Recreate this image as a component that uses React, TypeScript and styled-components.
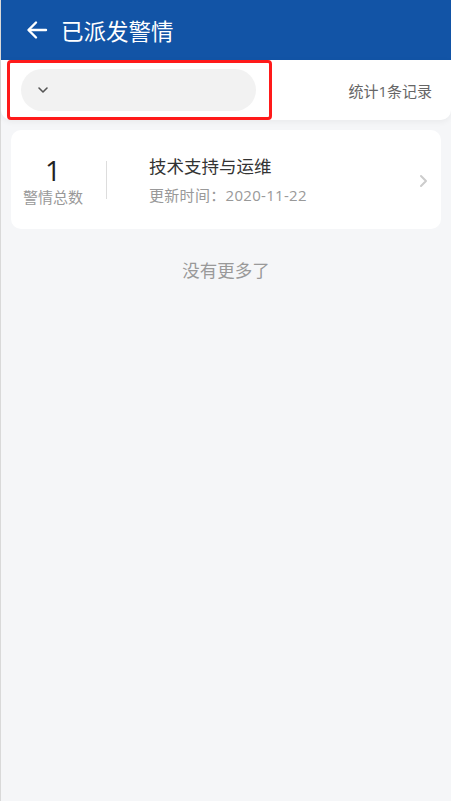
import React from "react";
import styled, { createGlobalStyle } from "styled-components";

const Global = createGlobalStyle`
  html, body { margin: 0; padding: 0; }
  body {
    background: #f5f6f8;
    font-family: "Open Sans", "Noto Sans CJK SC", sans-serif;
  }
  * { box-sizing: border-box; }
`;

const Page = styled.div`
  min-height: 801px;
  background: #f5f6f8;
  border-left: 1px solid #d9d9d9;
  display: flex;
  flex-direction: column;
`;

const Header = styled.header`
  height: 60px;
  background: #1254a6;
  display: flex;
  align-items: center;
  padding-left: 24px;
  gap: 12px;
  color: #fff;
`;

const Title = styled.h1`
  margin: 0;
  font-size: 22.5px;
  font-weight: 400;
  font-family: "Noto Sans CJK SC", sans-serif;
`;

const FilterBar = styled.div`
  height: 60px;
  background: #fff;
  border-radius: 0 0 10px 10px;
  box-shadow: 0 2px 6px rgba(0, 0, 0, 0.05);
  display: flex;
  align-items: center;
  justify-content: space-between;
  padding: 0 19px 0 6px;
`;

const Highlight = styled.div`
  width: 265px;
  height: 60px;
  border: 3px solid #ff1a1a;
  border-radius: 4px;
  display: flex;
  align-items: center;
  padding-left: 11px;
`;

const Select = styled.div`
  width: 235px;
  height: 42px;
  border-radius: 21px;
  background: #f2f2f2;
  display: flex;
  align-items: center;
  padding-left: 16px;
`;

const Count = styled.span`
  font-size: 15px;
  color: #666;
  font-family: "Open Sans", "Noto Sans CJK SC", sans-serif;
`;

const Content = styled.main`
  padding: 10px 10px 0 10px;
  display: flex;
  flex-direction: column;
`;

const Card = styled.div`
  height: 99px;
  background: #fff;
  border-radius: 10px;
  display: flex;
  align-items: center;
`;

const Stat = styled.div`
  width: 84px;
  display: flex;
  flex-direction: column;
  align-items: center;
  gap: 2px;
  padding-top: 2px;
`;

const StatNum = styled.span`
  font-size: 28px;
  line-height: 30px;
  color: #222;
  font-family: "Open Sans", sans-serif;
`;

const StatLabel = styled.span`
  font-size: 15px;
  line-height: 20px;
  color: #999;
  font-family: "Noto Sans CJK SC", sans-serif;
`;

const Divider = styled.div`
  width: 1px;
  height: 38px;
  background: #ddd;
  margin-left: 11px;
  margin-right: 42px;
`;

const Info = styled.div`
  flex: 1;
  display: flex;
  flex-direction: column;
  gap: 7px;
`;

const InfoTitle = styled.span`
  font-size: 17.5px;
  line-height: 24px;
  color: #333;
  font-family: "Noto Sans CJK SC", sans-serif;
`;

const InfoTime = styled.span`
  font-size: 15px;
  line-height: 20px;
  color: #999;
  letter-spacing: 0.3px;
  font-family: "Open Sans", "Noto Sans CJK SC", sans-serif;
`;

const Arrow = styled.div`
  width: 24px;
  display: flex;
  justify-content: center;
  margin-right: 6px;
  margin-top: 2px;
`;

const NoMore = styled.div`
  margin-top: 28px;
  text-align: center;
  font-size: 17.5px;
  color: #999;
  font-family: "Noto Sans CJK SC", sans-serif;
`;

export default function App() {
  return (
    <>
      <Global />
      <Page>
        <Header>
          <svg width="24" height="24" viewBox="0 0 24 24" fill="none" stroke="#fff" strokeWidth="2.4" strokeLinecap="round" strokeLinejoin="round">
            <path d="M21 12H4" />
            <path d="M11 4.5L3.5 12 11 19.5" />
          </svg>
          <Title>已派发警情</Title>
        </Header>
        <FilterBar>
          <Highlight>
            <Select>
              <svg width="12" height="8" viewBox="0 0 12 8" fill="none" stroke="#555" strokeWidth="1.6" strokeLinecap="round" strokeLinejoin="round">
                <path d="M2 2l4 4 4-4" />
              </svg>
            </Select>
          </Highlight>
          <Count>统计1条记录</Count>
        </FilterBar>
        <Content>
          <Card>
            <Stat>
              <StatNum>1</StatNum>
              <StatLabel>警情总数</StatLabel>
            </Stat>
            <Divider />
            <Info>
              <InfoTitle>技术支持与运维</InfoTitle>
              <InfoTime>更新时间：2020-11-22</InfoTime>
            </Info>
            <Arrow>
              <svg width="9" height="14" viewBox="0 0 9 14" fill="none" stroke="#ccc" strokeWidth="2" strokeLinecap="round" strokeLinejoin="round">
                <path d="M2 2l5 5-5 5" />
              </svg>
            </Arrow>
          </Card>
          <NoMore>没有更多了</NoMore>
        </Content>
      </Page>
    </>
  );
}
